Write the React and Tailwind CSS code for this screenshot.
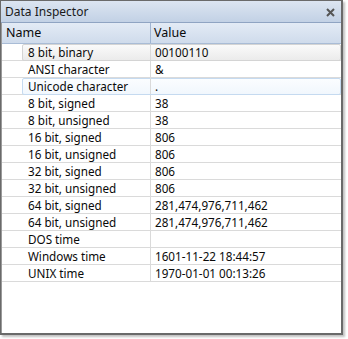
const rows = [
  ['8 bit, binary', '00100110'],
  ['ANSI character', '&'],
  ['Unicode character', '.'],
  ['8 bit, signed', '38'],
  ['8 bit, unsigned', '38'],
  ['16 bit, signed', '806'],
  ['16 bit, unsigned', '806'],
  ['32 bit, signed', '806'],
  ['32 bit, unsigned', '806'],
  ['64 bit, signed', '281,474,976,711,462'],
  ['64 bit, unsigned', '281,474,976,711,462'],
  ['DOS time', ''],
  ['Windows time', '1601-11-22 18:44:57'],
  ['UNIX time', '1970-01-01 00:13:26'],
]

function Row({ name, value, i }) {
  const selected = i === 0
  const hover = i === 2
  return (
    <div className="relative flex h-[17px] border-b border-[#dadada]">
      {selected && (
        <div className="absolute left-[20px] right-0 top-0 bottom-[-1px] rounded-[2px] border border-[#d4d4d4] bg-gradient-to-b from-[#fafafa] to-[#ebebeb]" />
      )}
      {hover && (
        <div className="absolute left-[20px] right-0 top-0 bottom-[-1px] rounded-[2px] border border-[#c5daf0] bg-gradient-to-b from-[#fbfdff] to-[#f1f7fd]" />
      )}
      <div className="relative w-[149px] shrink-0 border-r border-[#dadada] pl-[26px] leading-[16px]">{name}</div>
      <div className="relative flex-1 pl-[4px] leading-[16px]">{value}</div>
    </div>
  )
}

export default function App() {
  return (
    <div className="h-[339px] w-[348px] bg-white text-[11.7px] text-[#0a0a0a]" style={{ fontFamily: '"Noto Sans", "Liberation Sans", sans-serif' }}>
      <div className="flex h-[335px] w-[343px] flex-col border-t border-l border-r-2 border-b-2 border-[#6a6a6a] bg-white shadow-[2px_2px_2px_rgba(0,0,0,0.25)]">
        <div className="flex h-[22px] shrink-0 items-center justify-between border-b border-[#8fa4c2] bg-gradient-to-b from-[#dce5f1] to-[#c2d1e5] pl-[4px] pr-[6px]">
          <span className="text-[12px] text-[#1a1a1a]">Data Inspector</span>
          <svg width="9" height="9" viewBox="0 0 9 9" className="mt-[1px]">
            <path d="M1 1 L8 8 M8 1 L1 8" stroke="#555" strokeWidth="2" />
          </svg>
        </div>
        <div className="flex flex-1 flex-col border-l border-[#9a9a9a]">
          <div className="flex h-[21px] shrink-0 border-b border-[#a9bcd6] bg-gradient-to-b from-[#e3ebf5] to-[#cfdbeb]">
            <div className="w-[149px] shrink-0 border-r border-[#9fb4d2] pl-[4px] text-[12.5px] leading-[20px]">Name</div>
            <div className="flex-1 pl-[3px] text-[12.5px] leading-[20px]">Value</div>
          </div>
          {rows.map((r, i) => (
            <Row key={r[0]} name={r[0]} value={r[1]} i={i} />
          ))}
        </div>
      </div>
    </div>
  )
}
